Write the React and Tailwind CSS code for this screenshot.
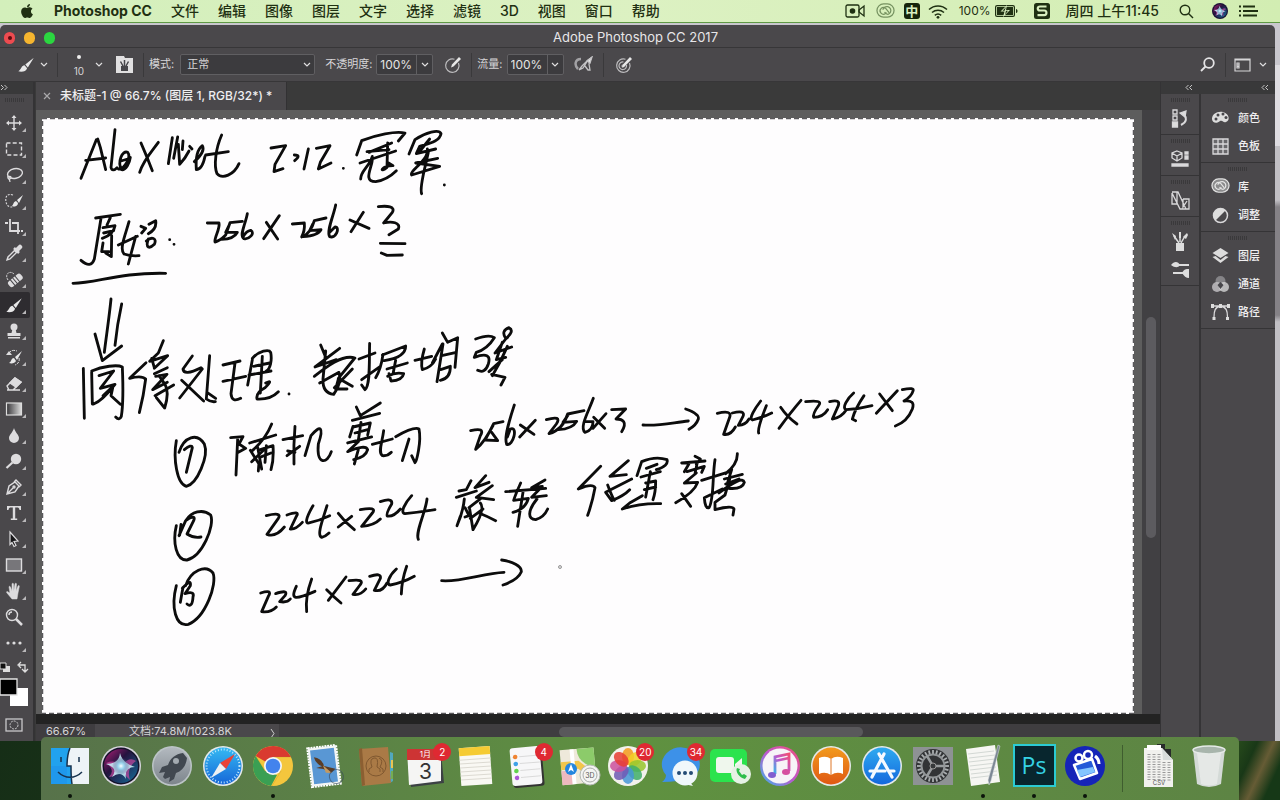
import React from "react";
import { FaApple } from "react-icons/fa";

const menus = ["文件", "编辑", "图像", "图层", "文字", "选择", "滤镜", "3D", "视图", "窗口", "帮助"];

function Chevron({ className = "" }) {
  return (
    <svg className={className} width="8" height="6" viewBox="0 0 8 6" fill="none" stroke="#e0dfe0" strokeWidth="1.2">
      <path d="M1 1l3 3 3-3" />
    </svg>
  );
}

function DoubleArrow({ flip, className = "" }) {
  return (
    <svg className={className} width="8" height="12" viewBox="0 0 8 12" fill="none" stroke="#c7c7c7">
      <path d={flip ? "M3.500 3L1 5.500 3.500 8M7 3L4.500 5.500 7 8" : "M1 3l2.500 2.500L1 8M4.500 3L7 5.500 4.500 8"} />
    </svg>
  );
}

function CloudRings({ size = 20, color = "#e2e2e2", fill = "#8b8b8c" }) {
  return (
    <svg width={size} height={size * 0.8} viewBox="0 0 20 16" fill="none" stroke={color} strokeWidth="1.3">
      <rect x="1" y="1" width="18" height="14" rx="7" fill={fill} />
      <path d="M11 10l-1 1a3.500 3.500 0 1 1 0-5.500l4 5" />
      <path d="M7 7l2-2.500a4.200 4.200 0 1 1 3.500 7.500c-1.500 0-2.500-1-3.500-2.500" />
    </svg>
  );
}

function SiriOrb({ size, rim = 0 }) {
  return (
    <svg width={size} height={size} viewBox="0 0 40 40">
      <defs>
        <radialGradient id="orb"><stop offset="0" stopColor="#fff" /><stop offset=".35" stopColor="#8fd3ef" stopOpacity=".8" /><stop offset="1" stopColor="#2a1d5b" stopOpacity="0" /></radialGradient>
        <linearGradient id="orbBase" x1="0" y1="0" x2="1" y2="1"><stop offset="0" stopColor="#b31f77" /><stop offset=".4" stopColor="#25133f" /><stop offset="1" stopColor="#136f9b" /></linearGradient>
      </defs>
      <circle cx="20" cy="20" r="20" fill={rim ? "#d7d5dd" : "#30234d"} />
      <circle cx="20" cy="20" r={rim ? 18.5 : 19} fill="#15122b" />
      <circle cx="20" cy="20" r="17" fill="url(#orbBase)" />
      <path d="M5 17Q15 13 20 20Q28 10 35 15Q25 22 29 34Q22 28 20 21Q15 31 8 31Q15 24 5 17" fill="#d34aa4" opacity=".65" />
      <path d="M19 7Q21 17 34 21Q23 21 25 33Q20 24 11 31Q18 22 5 18Q18 18 19 7" fill="#c8f4fb" opacity=".85" />
      <circle cx="20" cy="20" r="9" fill="url(#orb)" />
    </svg>
  );
}

function MenuBar() {
  return (
    <header className="flex h-[23px] shrink-0 items-center border-b border-[#5f9a45] bg-gradient-to-r from-[#d3efbb] via-[#dcf1c2] to-[#d2edb2] pr-[22px] pl-[20px] text-sm text-[#1f3012]">
      <FaApple className="mr-[20px] h-[16px] w-[14px] shrink-0" />
      <span className="mr-[19px] font-bold whitespace-nowrap">Photoshop CC</span>
      <nav className="flex gap-[19px] font-medium whitespace-nowrap">
        {menus.map((m) => <button key={m} type="button">{m}</button>)}
      </nav>
      <div className="ml-auto flex shrink-0 items-center whitespace-nowrap">
        <svg className="mr-[11px]" width="20" height="14" viewBox="0 0 20 14" fill="none" stroke="currentColor" strokeWidth="1.3">
          <rect x="1" y="1" width="13" height="12" rx="1.500" /><circle cx="7.500" cy="7" r="2.800" fill="currentColor" stroke="none" /><path d="M14 6l5-4v10l-5-4z" />
        </svg>
        <span className="mr-[9px] opacity-70"><CloudRings size={19} color="#4d6b3a" fill="none" /></span>
        <span className="mr-[8px] flex h-4 w-4 items-center justify-center rounded-[3px] bg-[#16250b] text-[13px] leading-4 font-bold text-[#d9efc0]">中</span>
        <svg className="mr-[11px]" width="20" height="15" viewBox="0 0 20 15" fill="none" stroke="currentColor" strokeWidth="1.500">
          <path d="M1 5.500a13 13 0 0 1 18 0M4 8.500a9 9 0 0 1 12 0M6.800 11.300a5 5 0 0 1 6.400 0" /><circle cx="10" cy="13.300" r="1.400" fill="currentColor" stroke="none" />
        </svg>
        <span className="mr-[4px] text-xs">100%</span>
        <svg className="mr-[16px]" width="23" height="12" viewBox="0 0 23 12">
          <rect x=".6" y=".6" width="18.800" height="10.800" rx="1.500" fill="none" stroke="currentColor" strokeWidth="1.200" /><rect x="2" y="2" width="16" height="8" fill="currentColor" />
          <path d="M21 4v4c2 0 2-4 0-4" fill="currentColor" /><path d="M12 0L5.500 6.500h4L8 12l7-7h-4z" fill="#d9efc0" /><path d="M11 2L7.500 5.700h3.500L10 9.500l3-3.700H9.700z" fill="currentColor" />
        </svg>
        <svg className="mr-[16px]" width="16" height="16" viewBox="0 0 16 16">
          <rect width="16" height="16" rx="2.500" fill="currentColor" /><path d="M12.500 3.500H6C3 3.500 3 7.300 6 7.500h4.200c3 .2 3 4.500 0 4.700H3.500" fill="none" stroke="#d9efc0" strokeWidth="2.200" />
        </svg>
        <span className="mr-[20px] font-medium">周四 上午11:45</span>
        <svg className="mr-[18px]" width="15" height="15" viewBox="0 0 15 15" fill="none" stroke="currentColor" strokeWidth="1.400"><circle cx="6" cy="6" r="4.800" /><path d="M9.500 9.500L14 14" /></svg>
        <SiriOrb size={16} />
        <svg className="ml-[11px]" width="19" height="12" viewBox="0 0 19 12" stroke="currentColor" strokeWidth="1.800"><path d="M0 1.500h2M4 1.500h12M0 6h2M4 6h15M0 10.500h2M4 10.500h14" /></svg>
      </div>
    </header>
  );
}

function PressureIcon({ rings }) {
  return (
    <svg width="18" height="18" viewBox="0 0 18 18" fill="none" stroke="#bdbcbe" strokeWidth="1.200">
      <path d="M14.500 7a6.700 6.700 0 1 1-4-3.700" />
      {rings ? <><path d="M11.500 9a3.800 3.800 0 1 1-3-3" /><circle cx="8" cy="10" r="1" /></> : null}
      <path d="M7 11.500l1-3L15 1l2 2-7.500 7.500z" fill="#e8e8e8" stroke="none" />
    </svg>
  );
}

function BrushGlyph() {
  return <g fill="#e8e8e9"><path d="M16.800 1.200L8.300 8l2.500 3z" /><path d="M7.500 8.700c-3 0-3 3.800-6.200 6.100 3.500.9 8 .2 8.800-3.100z" /></g>;
}

function PercentField({ id, label }) {
  return (
    <>
      <label htmlFor={id} className="mr-[4px]">{label}</label>
      <div className="flex h-[21px] shrink-0 rounded-[2px] border border-[#605f62] bg-[#3c3b3e]">
        <input id={id} defaultValue="100%" className="w-[39px] bg-transparent pl-[3px] text-xs text-[#e4e4e4] outline-none" />
        <button type="button" aria-label={label} className="flex w-[16px] items-center justify-center border-l border-[#605f62]"><Chevron /></button>
      </div>
    </>
  );
}

function Divider({ className = "" }) {
  return <span className={"h-[24px] w-px shrink-0 bg-[#3a393b] " + className} />;
}

function OptionsBar() {
  return (
    <div className="flex h-[35px] shrink-0 items-center border-t border-b border-[#373638] pr-[8px] pl-[17px] text-[11px] whitespace-nowrap text-[#d6d5d7]">
      <svg width="18" height="17" viewBox="0 0 18 16"><BrushGlyph /></svg>
      <Chevron className="ml-[5px]" />
      <Divider className="ml-[9px]" />
      <span className="ml-[9px] flex w-[24px] flex-col items-center pt-[4px] text-[10px] leading-[16px]"><i className="h-1 w-1 rounded-full bg-[#eeeeee]" /><span className="pt-[4px]">10</span></span>
      <Chevron className="ml-[4px]" />
      <svg className="ml-[12px]" width="19" height="18" viewBox="0 0 19 18"><path d="M1 0h8l1 2h8v15H1z" fill="#e1e0e1" /><path d="M6 10h7v5H6z" fill="#47464a" /><path d="M9.500 4v6M5.500 5.500L8 10M13.500 5.500L11 10" stroke="#47464a" strokeWidth="1.500" /></svg>
      <Divider className="ml-[9px]" />
      <label htmlFor="mode" className="mr-[6px] ml-[5px]">模式:</label>
      <div className="grid h-[21px] w-[135px] shrink-0 items-center rounded-[2px] border border-[#605f62] bg-[#3c3b3e]">
        <select id="mode" className="col-start-1 row-start-1 w-full appearance-none bg-transparent pl-[6px] outline-none"><option>正常</option></select>
        <Chevron className="pointer-events-none col-start-1 row-start-1 mr-[3px] justify-self-end" />
      </div>
      <span className="w-[10px]" />
      <PercentField id="opacity" label="不透明度:" />
      <span className="w-[11px]" /><PressureIcon />
      <Divider className="mr-[5px] ml-[9px]" />
      <PercentField id="flow" label="流量:" />
      <svg className="ml-[10px]" width="19" height="18" viewBox="0 0 19 18" fill="none" stroke="#c4c3c5" strokeWidth="1.300"><path d="M7 3C1 3 0 9 4 13" strokeWidth="2.500" stroke="#a2a1a4" /><path d="M5 14l4-2 5-8M5 14l3-4 6-6 3-2-2 6 1 6h-2l-3-4" /><path d="M13 5l5-4-2 6z" fill="#e8e8e8" /></svg>
      <Divider className="mr-[11px] ml-[10px]" />
      <PressureIcon rings />
      <svg className="ml-auto" width="15" height="15" viewBox="0 0 15 15" fill="none" stroke="#e5e4e6" strokeWidth="1.800"><circle cx="9" cy="6" r="4.800" /><path d="M5.500 9.500L1 14" /></svg>
      <Divider className="mr-[8px] ml-[10px]" />
      <svg width="17" height="14" viewBox="0 0 17 14" fill="none" stroke="#d6d5d7" strokeWidth="1.200"><path d="M1 1h15v12H1zM1 2h15M3 5h2v5H3zM3 7h2M3 8.500h2" /></svg>
      <Chevron className="ml-[8px]" />
    </div>
  );
}

const ink = { fill: "none", stroke: "#dddcde", strokeWidth: 1.4 };
const tools = [
  ["移动", <g {...ink}><path d="M9 2v14M2 9h14" /><path d="M9 1l2.500 3h-5zM9 17l2.500-3h-5zM1 9l3-2.500v5zM17 9l-3-2.500v5z" fill="#dddcde" stroke="none" /></g>],
  ["选框", <rect x="1.500" y="3" width="15" height="12" {...ink} strokeDasharray="4 2.200" />],
  ["套索", <g {...ink}><ellipse cx="10" cy="7.500" rx="7.500" ry="4.800" transform="rotate(-12 10 7.500)" /><path d="M3 10c-1 3 3 4 3 1.500 0-2-3-1-3 .5 0 1 2 1 2 4" strokeWidth="1.200" /></g>],
  ["快速选择", <g><path d="M8 3C2 1 0 5 1 10c1 5 5 6 8 4" {...ink} strokeWidth="1.100" strokeDasharray="2 1.300" /><path d="M18 3l-6 5 2 3zM11 9c-3 1-2 3-4 5 3 1 6 0 6-3z" fill="#e8e8e9" /></g>],
  ["裁剪", <path d="M5 1v12h10M0 5h3M7 5h6v11M16 13h2" {...ink} strokeWidth="1.800" />],
  ["吸管", <g {...ink}><path d="M10 6L3 13l-1 3 3-1 7-7" /><path d="M9 4l5 5" strokeWidth="2.500" /><path d="M11.500 6.500L15 3" strokeWidth="4.500" strokeLinecap="round" /></g>],
  ["修复画笔", <g><path d="M3 10C-1 4 5 0 9 4" {...ink} strokeDasharray="2 1" strokeWidth="1" /><g transform="rotate(-40 10 10)"><rect x="2" y="7" width="16" height="7" rx="2.500" fill="#dddcde" /><path d="M6.500 6v9M9.500 6v9M12.500 6v9" stroke="#47464a" strokeWidth="1" /></g></g>],
  ["画笔", <g transform="translate(0 1)"><BrushGlyph /></g>],
  ["图章", <g fill="#dddcde"><circle cx="9" cy="5" r="3.500" /><path d="M7.500 7h3l1 4h4v3h-13v-3h4zM3 15h12v1.500H3z" /></g>],
  ["历史画笔", <g><path d="M17 3l-7 6 2 3zM9 10c-3 0-2 3-5 5 3 1 6 0 7-2z" fill="#e8e8e9" /><path d="M1 7l3-4 3 4z" fill="#dddcde" /><path d="M4 5c2-3 5-3 8-2M14 10c1 3-1 6-4 7" {...ink} strokeWidth="1" strokeDasharray="3 1" /></g>],
  ["橡皮擦", <g {...ink}><path d="M2 12l8-8 6 4-8 8H4zM2 16h13" /><path d="M10 4l6 4-5 5-6-4z" fill="#dddcde" /></g>],
  ["渐变", <g><defs><linearGradient id="grad"><stop stopColor="#363538" /><stop offset="1" stopColor="#ddd" /></linearGradient></defs><rect x="1.500" y="3" width="15" height="12" fill="url(#grad)" stroke="#ddd" strokeWidth="1.200" /></g>],
  ["模糊", <path d="M9 2C8 6 4 9 4 12a5 5 0 0 0 10 0c0-3-4-6-5-10" fill="#dddcde" />],
  ["减淡", <g><circle cx="11" cy="7" r="5.200" fill="#dddcde" /><path d="M7.500 10.500L1.500 16" stroke="#dddcde" strokeWidth="2.200" /></g>],
  ["钢笔", <g {...ink}><path d="M2 16l2-8 6-4 4 4-4 6zM9 4l2-2 5 5-2 2M2 16l6-6" /><circle cx="9" cy="9" r="1" /></g>],
  ["文字", <path d="M2 2h14v4h-1.500c-.3-2-1-2.500-2.500-2.500h-1.800v11h2V16H5.800v-1.500h2v-11H6c-1.500 0-2.200.5-2.500 2.500H2z" fill="#dddcde" />],
  ["路径选择", <path d="M5 2l8 9-4 .5 2 4-2 1-2-4-2 2z" fill="#161517" stroke="#dddcde" strokeWidth="1.200" />],
  ["矩形", <rect x="1.500" y="3" width="15" height="12" fill="#77767a" stroke="#dddcde" strokeWidth="1.400" />],
  ["抓手", <path d="M7 17l-5-6c-1-1 0-2 1-1l2 1-1-6c0-1 1-1 1.500 0L7 9V2c0-1 1.500-1 1.500 0l.3 7L10 2c0-1 1.500-1 1.500 0L11 9l2-5c.5-1 1.500-.5 1.300.5L13 11l-1 6z" fill="#dddcde" stroke="#dddcde" strokeWidth=".5" />],
  ["缩放", <g {...ink}><circle cx="7" cy="7" r="5.500" /><path d="M4 7a3 3 0 0 1 3-3" /><path d="M11 11l6 6" strokeWidth="2.500" /></g>],
  ["更多", <g fill="#dddcde"><circle cx="3" cy="9" r="1.600" /><circle cx="9" cy="9" r="1.600" /><circle cx="15" cy="9" r="1.600" /></g>],
];

function Grip({ wide }) {
  return <div className={"mx-auto mt-[4px] h-[4px] bg-[repeating-linear-gradient(90deg,#3a393b_0_1px,transparent_1px_2px)] " + (wide ? "w-[20px]" : "w-[19px]")} />;
}

function ToolColumn() {
  return (
    <aside className="flex w-[34px] shrink-0 flex-col overflow-hidden border-r border-[#343335] bg-[#4a484b]">
      <div className="h-[12px] shrink-0 bg-[#39393a]"><DoubleArrow /></div>
      <div className="h-[16px] shrink-0 pr-[5px]"><Grip /></div>
      <div className="flex flex-col">
        {tools.map(([name, icon]) => (
          <button key={name} type="button" aria-label={name} className={"flex h-[26px] w-[30px] items-center rounded-r-[2px] pl-[5px] " + (name === "画笔" ? "bg-[#2e2c30]" : "")}>
            <svg width="18" height="18" viewBox="0 0 18 18">{icon}</svg>
            {name === "缩放" ? null : <svg className="mb-[4px] -ml-px self-end" width="4" height="4"><path d="M4 0v4H0z" fill="#b9b8ba" /></svg>}
          </button>
        ))}
      </div>
      <svg className="mt-[4px] shrink-0" width="30" height="78" viewBox="0 0 30 78">
        <path d="M3 6h7v6H3z" fill="#ddd" /><path d="M0 3h6v6H0z" fill="#111" stroke="#ddd" />
        <path d="M19 5h6v6M21 2l-3 3 3 3M22 9l3 3 3-3" fill="none" stroke="#ddd" strokeWidth="1.300" />
        <path d="M10 28h18v18H10z" fill="#fff" />
        <path d="M0 19h17v16H0z" fill="#000" stroke="#e5e5e5" strokeWidth="1.300" />
        <rect x="6" y="59" width="16" height="12" fill="#47464a" stroke="#c9c8ca" strokeWidth="1.300" /><circle cx="14" cy="65" r="4" fill="none" stroke="#c9c8ca" strokeDasharray="2 1" />
      </svg>
    </aside>
  );
}

/* Pen strokes of the artwork, grouped by line; each group is stored at three times its drawn size. */
const strokes = [
  ["translate(17 1) scale(.33333)", [
    "M66 178L112 62M116 60L124 85L140 152M80 124L140 117M168 32L156 145Q160 160 174 146",
    "M178 150C195 152 218 114 206 100C190 92 174 130 188 152C200 154 212 132 214 115M186 126L206 120",
    "M246 72L262 110L280 155M298 70C280 95 252 125 242 160",
    "M340 56L328 134M356 54L344 118M358 76L362 136Q380 116 390 96M372 66L370 92M392 82L399 90",
    "M406 128Q440 98 430 80Q408 96 412 152Q430 152 438 112M488 48C470 88 464 140 474 164C490 182 525 168 540 134M440 108L508 98",
    "M636 87L680 80L648 136L645 158L672 149M706 108Q728 108 707 125M748 90L735 150M772 88L813 80L784 130L778 150L816 132M853 148h.1",
    "M893 108L908 65C950 48 1010 35 1038 42L1018 66M930 100L998 72M903 132L1010 96M940 112C930 145 905 155 905 180M940 120C940 145 910 188 950 188Q985 182 1012 155M986 72L984 145C960 165 965 140 1002 140L985 130M924 98L990 92",
    "M1050 105L1068 62C1100 40 1140 30 1146 44C1142 66 1114 72 1082 82L1072 104L1130 90M1112 60L1078 102M1105 90C1110 125 1050 155 1058 168L1142 142L1070 132L1136 118M1108 100C1100 140 1080 205 1088 224M1156 198h.1",
    "M110 297L184 286M126 298L106 420Q96 450 66 424M154 296L144 318M132 326L168 320Q164 346 130 358M134 342L164 335M158 350L157 413L140 402M132 372L128 398L150 398",
    "M210 308C200 345 180 390 195 405Q215 412 240 410M230 352L208 435M178 378L235 352M246 322L260 328L248 342M270 316L290 305Q294 330 268 344M268 360C258 388 272 390 286 376C295 357 278 352 262 366M332 362h.1M345 376h.1",
    "M42 493C115 492 180 460 320 463",
    "M445 312L480 312C484 330 465 355 468 369Q482 366 500 348L513 311L550 307M512 315L500 340L535 340Q525 360 488 361M565 284C558 320 540 350 555 359C570 362 590 342 575 334Q562 336 553 352",
    "M622 310L656 360M661 290L614 359M700 315L736 312Q738 335 728 354Q755 345 766 305L801 297M762 314L752 335L786 332Q778 350 732 353M830 258C824 290 802 335 812 353C830 360 845 325 828 324L812 340",
    "M873 303L930 328M913 280L876 338M958 263C985 260 1010 262 1000 280L974 312C998 306 1026 310 1018 330L990 347M964 373L1038 374M967 402L984 409L1030 408",
  ]],
  ["translate(17 171) scale(.33333)", [
    "M156 30C150 90 142 140 136 190M188 45C178 90 172 130 168 169M108 135L130 215L188 171",
    "M73 238L76 388M98 246C130 232 175 226 190 234C192 280 193 345 187 382Q181 396 170 384M98 250L100 345M120 260L164 246L124 298L168 286Q130 335 104 345M132 320L162 292L156 320L184 346",
    "M212 268L261 221M212 268Q248 258 260 270Q254 320 241 371M313 155L298 192L272 217L326 200L286 238M278 208L286 236M286 254L325 236M290 262L324 256L281 302L325 280M344 288L288 320M300 260L318 286Q332 310 317 357L292 326",
    "M400 201L372 240Q374 262 426 236L430 240L362 327M368 274L434 336M452 200L442 330Q455 340 469 338M444 310L470 328",
    "M492 228L543 216M492 277L560 262M528 222L516 314Q518 342 545 328M580 212L566 288M580 208C600 185 630 180 635 190C640 215 633 240 622 246M584 232L632 222M570 258L636 246M610 202L604 312M620 282Q645 270 618 296Q590 310 594 330Q635 332 658 308M690 315h.1",
    "M785 168L800 205M842 178L768 234L832 212M766 262C800 235 850 195 888 207M800 186L792 270Q790 312 824 316Q850 280 840 250L782 282M885 210L838 268L880 292M880 240L826 296M838 270L830 300L864 300",
    "M900 210L948 192M932 163C930 210 935 290 918 302L908 288M908 272L964 232M970 198L1040 171Q1040 205 976 215M972 196Q966 240 950 266M984 240L1045 222M1010 214L1002 255M990 254L996 276Q1030 274 1034 254Q1010 248 986 262",
    "M1068 214L1118 202M1096 180Q1084 220 1090 242Q1118 235 1130 210M1150 132L1166 160L1196 146L1188 235M1152 165L1134 278M1120 222L1150 165M1148 200L1192 190M1145 242L1174 232Q1175 268 1144 274",
    "M1250 150Q1290 135 1306 146Q1285 180 1252 190L1246 205Q1300 185 1288 225Q1278 255 1256 244M1340 148Q1325 125 1350 116Q1368 125 1340 150L1308 192L1358 174M1330 160L1312 212L1340 205M1290 248L1330 212M1345 172Q1325 220 1300 260M1298 256L1338 265L1326 288",
    "M515 446L552 443L540 465L560 478L538 490M536 450L531 558M572 462L650 438M638 405Q620 450 580 485M574 484L600 525M596 475L608 540M604 482L642 470Q645 510 636 542M602 505L636 492M622 470L618 520M578 518L615 482M600 520L598 546",
    "M672 452L731 440M708 412Q703 470 705 525M684 500L722 472M686 486L708 490M738 500L756 440C785 405 795 415 778 465C772 530 805 525 817 488",
    "M892 354L904 380L964 342M880 394L962 373M882 412L872 444M882 414L934 402L926 438M888 432L926 422M906 400L898 454M866 462L938 444M900 456L866 488Q920 465 926 482Q920 505 884 512M898 482L886 525",
    "M940 466L1000 450M974 425C970 460 956 490 970 500Q985 502 997 490M1010 443Q1065 412 1080 420C1088 460 1072 518 1068 521L1058 500M1050 450L1030 515",
  ]],
  ["translate(417 251) scale(.33333)", [
    "M35 185Q80 174 64 200L50 241Q78 220 104 164L132 158M102 170L78 213L116 215L98 190M166 108C154 145 134 205 143 226C163 232 178 170 154 180L145 204",
    "M184 168L225 196M229 154L182 204M262 152Q310 138 292 165L270 194Q312 182 326 135L375 125M328 137L312 160L353 157Q340 180 298 182M403 88C390 125 360 175 378 190Q402 183 402 158L382 158M404 145L437 178M441 134L402 178",
    "M458 122L500 120L471 150C492 150 506 160 488 188M552 168C600 172 645 160 688 156M680 120C710 130 720 140 718 150C714 162 702 174 690 181",
    "M775 133Q820 122 812 145L794 196Q815 200 829 174M820 132Q860 122 852 142L838 169Q860 168 870 150M905 96C888 118 868 150 880 153Q912 145 938 132M922 110C910 140 895 180 899 192",
    "M965 115Q985 145 1014 165M1026 94Q995 130 960 178M1040 98Q1092 92 1080 108Q1060 135 1064 145Q1092 145 1106 122M1112 98Q1145 90 1138 110L1120 150Q1148 145 1162 122M1184 72C1165 88 1147 118 1162 122Q1200 120 1239 110M1215 80Q1188 120 1180 150L1190 155",
    "M1262 75L1300 125M1315 65L1252 133M1330 62Q1368 54 1362 66Q1358 82 1335 96Q1370 92 1360 120Q1345 158 1309 171",
    "M425 292L358 360Q400 342 408 356Q400 400 386 439M508 275L453 322L502 317M446 348Q460 385 466 394M518 330L440 370L458 395Q495 380 512 362",
    "M534 320L548 278Q590 260 624 272Q630 290 592 302M562 298L594 286M546 324L604 308M574 308L560 384M560 342L590 336Q590 370 582 392M556 362L590 354M550 380L512 402L490 420Q545 402 605 404",
    "M708 262L724 270L712 286M668 282L738 276M690 284L676 308M714 284L708 314M684 308L736 292L728 310M712 312L676 342L716 340Q706 370 650 401M668 374L695 412",
    "M728 334L812 308M768 272C760 320 765 395 750 416Q738 420 736 386L790 360M835 254Q836 285 800 314M796 330L850 316M818 302L806 340M800 345L840 330M780 372Q850 318 856 340Q850 362 808 358M812 330L798 378L768 400L768 422Q820 408 825 420L822 438",
  ]],
  ["translate(117 311) scale(.33333)", [
    "M52 35C42 90 54 165 82 172C115 165 150 80 136 45C115 10 75 22 60 70M76 62Q98 44 100 56L82 130",
    "M52 290C40 340 52 395 84 393C130 382 168 290 155 258C130 238 98 248 80 275L60 320M66 286L62 318M84 272Q112 255 104 275L84 315Q104 328 126 324",
    "M322 260Q370 248 358 268L324 316Q350 326 376 294M384 258Q425 244 412 262L394 300Q410 302 430 280M462 230C440 268 438 285 450 282Q480 275 512 260M504 230C492 270 472 320 488 325Q500 322 510 312",
    "M538 253Q558 280 586 302M578 262L538 294M604 242Q656 232 640 252L608 292Q645 290 664 270M664 218Q702 205 698 225Q680 255 685 261Q704 264 724 240M758 200C738 222 722 252 738 254Q780 250 828 242M804 210C800 250 768 310 778 331",
    "M936 155L922 182L900 186M892 205L952 186M916 210Q912 250 894 290L904 262M918 236L930 260L918 264M980 140L948 176L990 160M1000 170L952 205L1004 212M966 208L930 236M932 240L942 302Q980 240 964 222M934 268L972 240M960 252Q985 262 1010 275",
    "M1040 188L1160 178M1085 162Q1068 200 1064 214L1108 208Q1100 240 1062 250M1092 190L1076 292M1158 153L1118 176L1150 172L1118 205L1162 200M1134 210C1105 245 1106 272 1130 272Q1155 265 1166 240",
    "M52 470C35 535 50 595 88 586C140 565 175 465 162 432C140 405 95 425 80 470M72 475L64 520M70 478Q98 448 94 470L78 494Q108 485 102 504Q100 538 84 525",
    "M305 492Q342 480 328 502L308 548Q335 552 352 534M350 494Q390 480 378 500L362 518Q385 522 394 510M412 472C392 515 410 512 468 487M458 450Q438 505 443 548M503 482Q525 504 546 522M561 444L508 514",
    "M570 455Q620 448 603 468L582 496Q605 500 620 480M632 442Q668 430 664 448L646 484Q670 490 684 462M712 420C690 440 680 466 694 468Q730 462 766 442M743 412Q728 455 727 495M848 455C905 460 975 432 1035 430M1028 393C1060 398 1088 410 1087 428C1080 445 1055 460 1032 468",
  ]],
];

function Artwork() {
  return (
    <svg role="img" aria-label="AlexNet 手写笔记" className="h-full w-full bg-[#fefdfe]">
      {strokes.map(([transform, lines]) => (
        <g key={transform} transform={transform} fill="none" stroke="#0c0c0c" strokeWidth="8.500" strokeLinecap="round" strokeLinejoin="round">
          {lines.map((d) => <path key={d} d={d} />)}
        </g>
      ))}
      <circle cx="518" cy="449" r="1.500" fill="#ddd" stroke="#999" />
      <rect width="100%" height="100%" fill="none" stroke="#5a595c" strokeWidth="2.500" strokeDasharray="5 3" />
    </svg>
  );
}

function DocumentArea() {
  return (
    <main className="flex min-w-0 flex-1 flex-col border-l border-[#343335] bg-[#3a3a3a] pl-px">
      <div className="flex h-[28px] shrink-0">
        <div className="flex items-center border-r border-[#323133] bg-[#4a484b] pr-[14px] pl-[7px] text-xs font-medium whitespace-nowrap text-[#efeef0]">
          <button type="button" aria-label="关闭" className="mr-[9px]"><svg className="block" width="8" height="8" viewBox="0 0 8 8" stroke="#aaa9ab" strokeWidth="1.200"><path d="M1 1l6 6M7 1L1 7" /></svg></button>
          未标题-1 @ 66.7% (图层 1, RGB/32*) *
        </div>
      </div>
      <div className="flex min-h-0 flex-1">
        <div className="min-w-0 flex-1 bg-[#5d5d5d] pt-[8px] pr-[8px] pl-[6px]"><Artwork /></div>
        <div className="flex w-[18px] shrink-0 flex-col items-center bg-[#414043]">
          <div className="min-h-0 flex-[207]" /><div className="min-h-0 w-[10px] flex-[222] rounded-full bg-[#5c5b5f]" /><div className="min-h-0 flex-[176]" />
        </div>
      </div>
      <div className="h-[10px] shrink-0 bg-[#232323]" />
      <div className="flex h-[17px] shrink-0 items-start bg-[#3f3d40] text-[11px] leading-[14px] text-[#d5d4d6]">
        <input aria-label="缩放比例" defaultValue="66.67%" className="mt-px h-[13px] w-[59px] bg-transparent pl-[10px] leading-[13px] outline-none" />
        <div className="flex h-full w-[184px] items-start bg-[#4a484b] pt-px pr-[4px] pl-[34px]">
          <span className="leading-[13px] whitespace-nowrap">文档:74.8M/1023.8K</span>
          <svg className="mt-[4px] ml-auto" width="5" height="9" viewBox="0 0 5 9" fill="none" stroke="#ccc"><path d="M1 0l3 4.500L1 9" /></svg>
        </div>
        <div className="flex flex-1 pt-[3px]"><div className="flex-[280]" /><div className="h-[10px] flex-[304] rounded-full bg-[#59585b]" /><div className="flex-[297]" /></div>
      </div>
    </main>
  );
}

const side = { fill: "none", stroke: "#d9d8da", strokeWidth: 1.3 };
const iconGroups = [
  [["历史记录", <g {...side}><path d="M2 1h4v4H2zM2 7h4v4H2z" /><path d="M1.500 13h5v5h-5z" fill="#ddd" /><path d="M10 16c6-3 6-7 3-11" strokeWidth="2" /><path d="M9 4l6-2-1 6z" fill="#ddd" /></g>]],
  [["属性", <g {...side}><path d="M6 1l5 2v5l-5 3-5-3V3zM1 3l5 3 5-3M6 6v5" /><path d="M14 2h3v2h-3zM14 6h3v3h-3zM1 14h16v2H1z" fill="#ddd" /></g>]],
  [["信息", <g {...side}><path d="M1 1h6l8 17H9L1 2v11h5V1M12 8h6v10h-3M12 8v8l4-6" /></g>]],
  [["画笔预设", <g fill="#ddd"><path d="M5 11h8v8H5z" /><path d="M8 11L3 4M9 10V3M10 11l4-7" stroke="#ddd" strokeWidth="1.500" /><path d="M1 1l4 3-1 4zM8 0h2v6H8zM12 5l4-4 1 2-2 4z" /></g>], ["画笔设置", <g fill="#ddd"><path d="M0 5c3-4 7-4 9 0-2 3-5 3-9 0zM8 4h10v2H8zM2 12h10v2H2zM11 13c2-4 4-4 7-4v9c-3 0-5-2-7-5z" /></g>]],
];
const labelGroups = [
  [["颜色", <g><path d="M1 10c0-5 5-8 11-7 7 2 7 9 3 10-3 1-3-2-6-1-3 3-8 2-8-2z" fill="#ddd" /><g fill="#47464a"><circle cx="5" cy="10" r="1.500" /><circle cx="7" cy="6" r="1.500" /><circle cx="12" cy="5" r="1.500" /><circle cx="15" cy="8.500" r="1.500" /></g></g>], ["色板", <g {...side}><path d="M2 2h15v15H2z" fill="#68676a" /><path d="M7 2v15M12 2v15M2 7h15M2 12h15" /></g>]],
  [["库", <CloudRings size={19} />], ["调整", <g><circle cx="9.500" cy="9.500" r="7" {...side} strokeWidth="1.500" /><path d="M14.500 4.500v10h-10z" fill="#47464a" opacity="0" /><path d="M4.500 14.500l10-10a7 7 0 0 0-10 10z" fill="#ddd" /></g>]],
  [["图层", <g fill="#ddd"><path d="M9.500 1l8 5-8 5-8-5z" /><path d="M1.500 10l3-1 5 4 5-4 3 1-8 6z" /></g>], ["通道", <g><circle cx="9.500" cy="6" r="5" fill="#858487" /><circle cx="6" cy="12" r="5" fill="#c1c0c2" opacity=".85" /><circle cx="13" cy="12" r="5" fill="#ddd" opacity=".75" /><path d="M9.500 7l3 3-3 4-3-4z" fill="#47464a" /></g>], ["路径", <g {...side}><path d="M0 3h19M9.500 3C4 4 3 8 3 14M9.500 3c6 1 7 5 7 11" /><path d="M0 1h3v4H0zM8 1h3v4H8zM16 1h3v4h-3zM1.500 14h3v3h-3zM15 14h3v3h-3z" fill="#ddd" stroke="none" /></g>]],
];

function Panels() {
  return (
    <aside className="flex w-[115px] shrink-0 flex-col border-l border-[#343335] bg-[#4a484b]">
      <div className="flex h-[12px] shrink-0 justify-between bg-[#39393a] pr-[6px] pl-[24px]"><DoubleArrow flip /><DoubleArrow flip /></div>
      <div className="flex min-h-0 flex-1">
        <div className="w-[40px] border-r-2 border-[#353436]">
          {iconGroups.map((group, i) => (
            <div key={i} className="border-b border-[#353436] pb-[2px]"><Grip />
              {group.map(([name, icon]) => <button key={name} type="button" aria-label={name} className="flex h-[28px] w-full items-center justify-center pt-[4px]"><svg width="19" height="19" viewBox="0 0 19 19">{icon}</svg></button>)}
              <div className="h-[2px]" />
            </div>
          ))}
        </div>
        <div className="flex-1">
          {labelGroups.map((group, i) => (
            <div key={i} className="border-b border-[#353436] pb-[4px]"><Grip wide />
              {group.map(([name, icon]) => <button key={name} type="button" className="flex h-[28px] w-full items-center pt-[5px] pl-[10px] text-[11px] font-medium text-[#f0eff1]"><svg className="mr-[8px]" width="19" height="19" viewBox="0 0 19 19">{icon}</svg>{name}</button>)}
            </div>
          ))}
        </div>
      </div>
    </aside>
  );
}

function Ball({ id, from, to, rim = "#e5e9e9", children }) {
  return <g><defs><linearGradient id={id} x1="0" y1="0" x2="0" y2="1"><stop stopColor={from} /><stop offset="1" stopColor={to} /></linearGradient></defs><circle cx="20" cy="20" r="20" fill={rim} /><circle cx="20" cy="20" r="18.500" fill={"url(#" + id + ")"} />{children}</g>;
}

const petals = ["#f49a1b", "#f2cf24", "#98c52c", "#3fae69", "#4595d6", "#7059b4", "#cb509d", "#e83c32"];
const ticks = Array.from({ length: 24 }, (_, i) => i * 15);
const dock = [
  { name: "访达", run: true, art: <g><path d="M1 2h38v36H1z" fill="#eef3f7" /><path d="M1 2h19c-2 6-3 11-3 18h4c0 6 0 12 1 18H1z" fill="#21a2ee" /><path d="M1 20h16v18H1z" fill="#1d86e8" opacity=".35" /><path d="M11 11v5M29 11v5M8 26c7 7 17 7 24 0M20 2c-3 7-3 12-3 18h4c0 6 0 12 1 18" fill="none" stroke="#17324e" strokeWidth="1.500" /></g> },
  { name: "Siri", orb: true },
  { name: "启动台", art: <Ball id="launch" from="#b3b9bf" to="#7d858c" rim="#bcc4c7"><path d="M31 7c-8 1-13 6-15 12l-6 2-3 6 6-1-2 5 2 2 5-2-1 5 5-3 2-6c6-2 10-7 11-15z" fill="#414850" /><circle cx="24" cy="15" r="3" fill="#a3aab0" /></Ball> },
  { name: "Safari", art: <Ball id="safari" from="#35b9f2" to="#1666d8"><circle cx="20" cy="20" r="16.500" fill="none" stroke="#bde6fb" strokeWidth="2" strokeDasharray="1 2" /><path d="M32 8L17 17l6 6z" fill="#e84338" /><path d="M8 32l9-15 6 6z" fill="#eef0f2" /></Ball> },
  { name: "Chrome", run: true, art: <g><circle cx="20" cy="20" r="20" fill="#f4c63d" /><path d="M20 20L2.700 10A20 20 0 0 1 38 11H20z" fill="#d93a30" /><path d="M2.700 10L12 25l12 4-6 11A20 20 0 0 1 2.700 10" fill="#3a9f53" /><path d="M20 11h18M28 25l-9 15M12 25L3 10" stroke="#b58825" strokeOpacity=".25" /><circle cx="20" cy="20" r="9" fill="#f5f5f5" /><circle cx="20" cy="20" r="7.300" fill="#4383ed" /></g> },
  { name: "邮件", art: <g transform="rotate(-7 20 20)"><rect x="6" y="1" width="28" height="38" fill="#5997d4" stroke="#fff" strokeWidth="3" strokeDasharray="2 .8" /><rect x="7" y="2" width="26" height="36" fill="none" stroke="#f4f6f4" strokeWidth="2" /><path d="M11 10q8 2 9 10l11 4-5 4-7-5-7-2 6-1q-6-3-7-10" fill="#5a3d27" /><path d="M19 19l8 9-6-1z" fill="#c39a62" /><circle cx="31" cy="32" r="7" fill="none" stroke="#35465a" opacity=".6" /></g> },
  { name: "通讯录", art: <g><path d="M35 6l3 1v28l-3 2z" fill="#52a8be" /><path d="M36 14h2v8h-2z" fill="#eac452" /><path d="M36 25h2v8h-2z" fill="#75ad53" /><path d="M4 3l29-2 3 36-29 3z" fill="#aa7a46" /><path d="M4 3l3-1 3 37-3 1z" fill="#8b5f32" /><g fill="none" stroke="#805830"><circle cx="21" cy="20" r="10" /><path d="M14 26v-3l3-2q-3-8 2-9t3 9l3 2v3M24 12q5 2 1 9l3 2v3" /></g></g> },
  { name: "日历", badge: "2", calendar: true, art: <g><path d="M2 6h34l3 31-33 4z" fill="#3c4144" /><path d="M2 4h34v31l-32 4z" fill="#f5f5f4" /><path d="M2 3h34v11H2z" fill="#cd3434" /></g> },
  { name: "备忘录", art: <g transform="rotate(-4 20 20)"><path d="M4 1h31v38H4z" fill="#f9f8f3" /><path d="M4 1h31v8H4z" fill="#f5cb33" /><path d="M4 13h31M4 17h31M4 21h31M4 25h31M4 29h31M4 33h31" stroke="#dcdad2" /></g> },
  { name: "提醒事项", badge: "4", art: <g transform="rotate(-5 20 20)"><rect x="5" y="2" width="31" height="39" rx="3" fill="#333" /><rect x="4" y="1" width="30" height="38" rx="3" fill="#f7f7f8" /><path d="M13 10h20M13 17h20M13 24h20M13 31h20" stroke="#dadada" /><circle cx="9" cy="10" r="2.300" fill="#ef8432" /><circle cx="9" cy="17" r="2.300" fill="#3da1e7" /><circle cx="9" cy="24" r="2.300" fill="#5fd34d" /><circle cx="9" cy="31" r="2.300" fill="#a956d6" /></g> },
  { name: "地图", art: <g><g transform="rotate(-5 18 20)"><path d="M3 3h34v35H3z" fill="#eee9db" /><path d="M20 3h17v20Q20 18 20 3" fill="#8ccb6a" /><path d="M3 24h13v14H3z" fill="#eeb9bf" /><path d="M3 15h18l16 15v8L20 23H3z" fill="#f1c64b" /><path d="M15 3v35" stroke="#fff" strokeWidth="4" /></g><circle cx="13" cy="23" r="6" fill="#2486de" /><path d="M13 18l3 8-3-2-3 2z" fill="#fff" /><circle cx="32" cy="29" r="10" fill="#f4f4f2" stroke="#b5b9b5" /><circle cx="32" cy="29" r="7" fill="none" stroke="#a9acaa" /><text x="32" y="32" textAnchor="middle" fontSize="7" fill="#555">3D</text></g> },
  { name: "照片", badge: "20", art: <g><circle cx="20" cy="20" r="20" fill="#f2f1ec" />{petals.map((c, i) => <ellipse key={c} cx="20" cy="10.500" rx="6" ry="8.500" fill={c} opacity=".85" transform={"rotate(" + i * 45 + " 20 20)"} />)}</g> },
  { name: "信息", badge: "34", art: <g><path d="M3 36q4-3 4-7A19 17 0 1 1 18 35q-7 1-15 1" fill="#3d91e8" /><circle cx="26" cy="27" r="12.500" fill="#f0f7fb" /><path d="M31 36l3 4-9-2z" fill="#f0f7fb" /><g fill="#244b75"><circle cx="20" cy="27" r="2" /><circle cx="26" cy="27" r="2" /><circle cx="32" cy="27" r="2" /></g></g> },
  { name: "FaceTime", art: <g><rect x="0" y="3" width="37" height="33" rx="5" fill="#2be34d" /><rect x="6" y="11" width="18" height="16" rx="3" fill="#eff7ed" /><path d="M25 18l7-6v16l-7-5z" fill="#eff7ed" /><circle cx="31" cy="28" r="10" fill="#e6f1e5" /><path d="M27 22c-2 3 2 10 8 11l2-3-3-2-2 1-3-4 1-2z" fill="#2ebd4b" /></g> },
  { name: "iTunes", art: <g><defs><linearGradient id="music" x1="0" y1="1" x2="1" y2="0"><stop stopColor="#38b8ea" /><stop offset=".5" stopColor="#bd58cd" /><stop offset="1" stopColor="#f24e73" /></linearGradient></defs><circle cx="20" cy="20" r="20" fill="url(#music)" /><circle cx="20" cy="20" r="17.500" fill="#f7f4f8" /><path d="M15 28V11l14-3v17M15 15l14-3" fill="none" stroke="url(#music)" strokeWidth="2.800" /><ellipse cx="12" cy="29" rx="4" ry="3" fill="#825fd0" /><ellipse cx="26" cy="26" rx="4" ry="3" fill="#d650a0" /></g> },
  { name: "图书", art: <Ball id="books" from="#f29a1d" to="#df5813"><path d="M8 12q7-3 12 1v16q-6-4-12-1zM32 12q-7-3-12 1v16q6-4 12-1z" fill="#fff" /><path d="M20 13v16" stroke="#df7726" /></Ball> },
  { name: "App Store", art: <Ball id="store" from="#2eaaf0" to="#1468dd"><path d="M22 8L10 31M17 8l13 23M8 25h15M27 25h5" stroke="#f5faff" strokeWidth="3.200" strokeLinecap="round" /></Ball> },
  { name: "系统偏好设置", art: <g><rect y="1" width="40" height="38" fill="#8e9294" /><circle cx="20" cy="20" r="17" fill="#323436" />{ticks.map((a) => <path key={a} d="M20 4v4" stroke="#aaaeb0" strokeWidth="1.800" transform={"rotate(" + a + " 20 20)"} />)}<circle cx="20" cy="20" r="11.500" fill="none" stroke="#929698" strokeWidth="2" /><path d="M20 20L14 10M20 20h11M20 20l-6 10" stroke="#989c9e" strokeWidth="2.500" /><circle cx="20" cy="20" r="3" fill="#36393b" stroke="#999" /></g> },
  { name: "文本编辑", run: true, art: <g><path d="M3 3l29-4 5 37-29 4z" fill="#f6f6f3" /><path d="M5 8l26-3M6 12l26-3M6 16l26-3M7 20l26-3M7 24l26-3M8 28l26-3M8 32l26-3" stroke="#d3d8d4" /><path d="M35-1l2 1-9 35-2 4-1-5z" fill="#7c8794" stroke="#e1e5e7" strokeWidth=".5" /></g> },
  { name: "Photoshop", run: true, ps: true },
  { name: "录屏", run: true, art: <g><circle cx="20" cy="20" r="20" fill="#1524b8" /><circle cx="14" cy="12" r="3.500" fill="none" stroke="#fff" strokeWidth="2.500" /><circle cx="23" cy="9" r="4" fill="none" stroke="#fff" strokeWidth="2.500" /><path d="M9 19l18-6 5 14-17 6z" fill="#2459d8" stroke="#fff" strokeWidth="2.500" strokeLinejoin="round" /><path d="M12 24l16-3 2 5-15 5z" fill="#83c5ff" /><path d="M30 10q4 3 4 8" stroke="#fff" strokeWidth="3" fill="none" /></g> },
];

function DockItem({ item }) {
  return (
    <button type="button" aria-label={item.name} className="relative flex h-[63px] min-w-0 flex-1 flex-col items-center pt-[9px]">
      {item.orb ? <SiriOrb size={40} rim={1} /> : item.ps ? (
        <span className="-mt-[2px] flex h-[43px] w-[43px] shrink-0 items-center justify-center border-2 border-[#2bcbd3] bg-[#08262e] font-['Open_Sans'] text-[23px] leading-none text-[#36d3e4]">Ps</span>
      ) : (
        <svg className="shrink-0 overflow-visible" width="40" height="40" viewBox="0 0 40 40">{item.art}</svg>
      )}
      {item.calendar ? <span className="absolute top-[9px] left-1/2 flex w-[34px] -translate-x-[17px] flex-col items-center text-[#333]"><span className="text-[8px] leading-[16px] text-white">1月</span><span className="text-[21px] leading-[20px]">3</span></span> : null}
      {item.badge ? <span className="absolute top-[6px] left-1/2 flex h-[18px] w-[18px] translate-x-[8px] items-center justify-center rounded-full bg-[#df2932] text-[10px] text-white">{item.badge}</span> : null}
      {item.run ? <span className="absolute bottom-[2px] h-1 w-1 rounded-full bg-[#0b140a]" /> : null}
    </button>
  );
}

function Dock() {
  return (
    <footer className="absolute inset-x-[41px] bottom-0 flex h-[63px] rounded-t-[5px] bg-gradient-to-r from-[#57724a] via-[#5f9140] to-[#5d8444] pr-[5px] pl-[4px]">
      <div className="flex min-w-0 flex-1">{dock.map((item) => <DockItem key={item.name} item={item} />)}</div>
      <span className="mt-[8px] mr-[11px] ml-[12px] h-[47px] w-px bg-[#3f5d2f]" />
      <button type="button" aria-label="CSV 文档" className="flex w-[50px] justify-center pt-[7px]">
        <svg width="32" height="44" viewBox="0 0 32 44"><path d="M4 2h10V0h8v5h6v12H4z" fill="#282b2a" /><path d="M1 4h18l11 12v27H1z" fill="#f1f1ee" /><path d="M4 1h14v5H4z" fill="#fff" /><path d="M19 4l11 12H20z" fill="#d8dcda" /><path d="M6 10v27M11 10v27M16 10v27M21 18v19M26 18v19" stroke="#999" strokeWidth="3" strokeDasharray="1 1.500" /><text x="16" y="41" textAnchor="middle" fontSize="6" fill="#555">CSV</text></svg>
      </button>
      <button type="button" aria-label="废纸篓" className="flex w-[50px] justify-center pt-[8px]">
        <svg width="34" height="43" viewBox="0 0 34 43"><path d="M1 4l4 35q12 6 24 0l4-35z" fill="#d4dad7" /><path d="M5 8l4 31q8 3 16 0l4-31z" fill="#eceeed" opacity=".7" /><ellipse cx="17" cy="5" rx="16" ry="4" fill="#a8b5ac" stroke="#e5eae7" strokeWidth="1.500" /></svg>
      </button>
    </footer>
  );
}

export default function App() {
  return (
    <div className="relative flex h-screen min-h-[700px] flex-col overflow-hidden bg-[linear-gradient(115deg,#122d15_0_2%,#1d4420_3%,#102515_5%,#31571f_95%,#193817_97%,#665c35_98%,#163817_99%)] font-['Inter','Noto_Sans_CJK_SC',sans-serif]">
      <MenuBar />
      <div className="mb-[59px] flex min-h-0 flex-1 bg-[#c9c7ce] pt-[2px]">
        <div className="flex min-w-0 flex-1 flex-col overflow-hidden rounded-t-[5px] bg-[#4a484b]">
          <div className="flex h-[22px] shrink-0 items-center pt-[3px] pr-[8px]">
            <div className="flex flex-1 items-center gap-[9px] pl-[4px]">
              <button type="button" aria-label="关闭窗口" className="flex h-[12px] w-[11px] items-center justify-center rounded-full bg-[#ed4b50]"><i className="h-1 w-1 rounded-full bg-[#5c0c0e]" /></button>
              <button type="button" aria-label="最小化" className="h-[12px] w-[11px] rounded-full bg-[#f5b52f]" />
              <button type="button" aria-label="全屏" className="h-[12px] w-[11px] rounded-full bg-[#2bd640]" />
            </div>
            <h1 className="text-[13px] text-[#e7e6e8]">Adobe Photoshop CC 2017</h1>
            <div className="flex-1" />
          </div>
          <OptionsBar />
          <div className="flex min-h-0 flex-1"><ToolColumn /><DocumentArea /><Panels /></div>
        </div>
        <div className="mt-[40px] w-[5px] shrink-0 bg-[linear-gradient(#dedce1_0_12%,#c1bfc4_12%_20%,#858287_21%_37%,#c1bfc4_38%)]" />
      </div>
      <Dock />
    </div>
  );
}
